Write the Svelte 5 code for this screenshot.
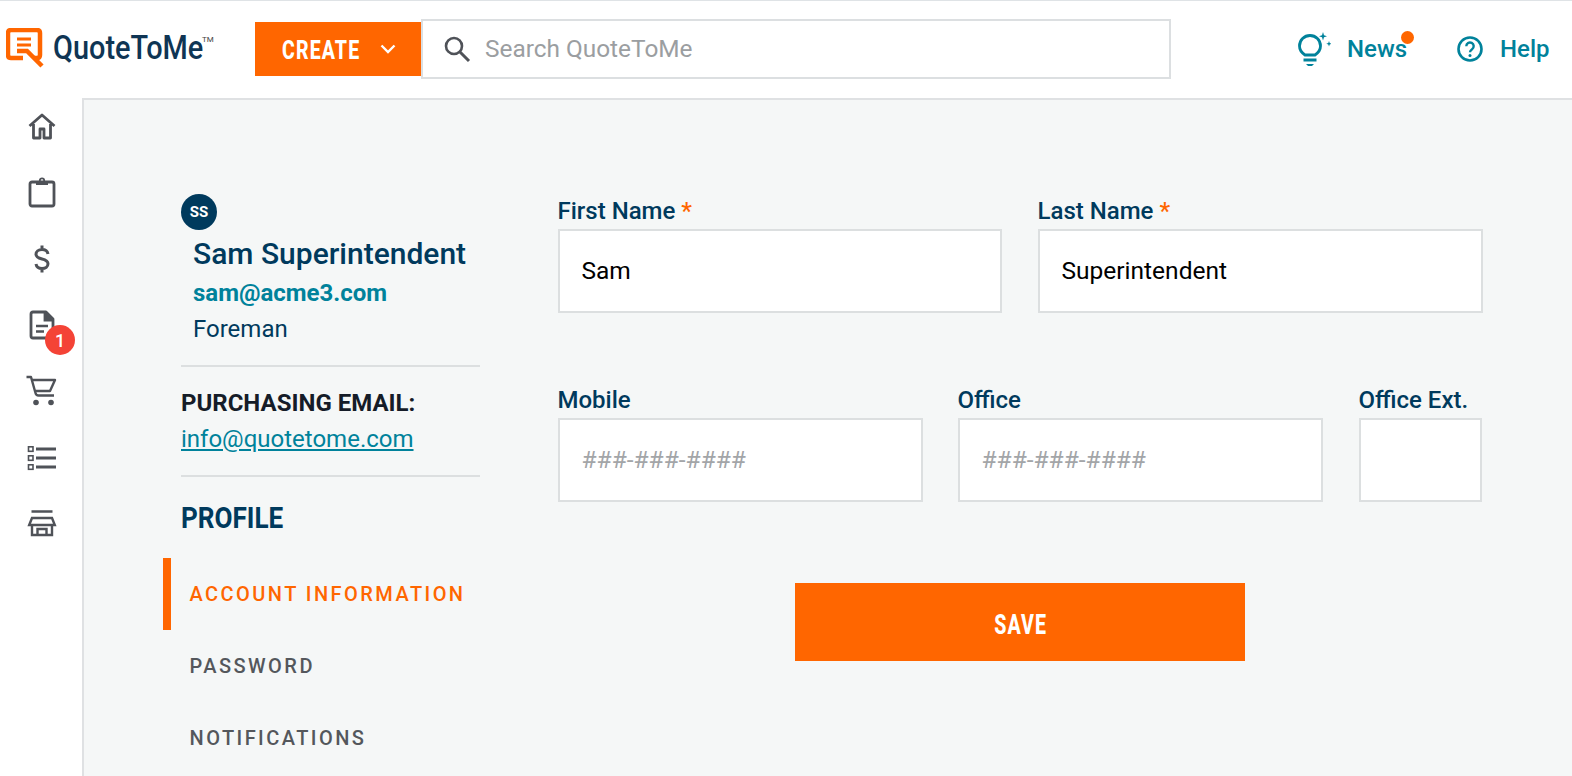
<script>
  const navIcons = ["home", "clipboard", "dollar", "doc", "cart", "list", "store"];
  const menu = [
    { label: "ACCOUNT INFORMATION", active: true },
    { label: "PASSWORD", active: false },
    { label: "NOTIFICATIONS", active: false }
  ];
</script>

<div class="page">
  <header class="topbar">
    <div class="logo">
      <svg width="38" height="44" viewBox="0 0 38 44" fill="none">
        <path d="M17 30H5q-3 0-3-3V5q0-3 3-3h26q3 0 3 3v22q0 3-3 3h-3" stroke="#ff6600" stroke-width="4.500" />
        <path d="M11 11h14M11 17h14" stroke="#ff6600" stroke-width="3" />
        <path d="M11 23h10l15 15" stroke="#ff6600" stroke-width="4.500" />
      </svg>
      <span class="wordmark">QuoteToMe</span><span class="tm">TM</span>
    </div>
    <button class="create">
      <span class="create-text">CREATE</span>
      <svg width="16" height="10" viewBox="0 0 16 10" fill="none"><path d="M1.5 1.5 8 8l6.5-6.5" stroke="#fff" stroke-width="2.4" /></svg>
    </button>
    <div class="search">
      <svg width="28" height="28" viewBox="0 0 28 28" fill="none">
        <circle cx="11" cy="11" r="8" stroke="#4f5258" stroke-width="2.6" />
        <path d="m17 17 9 9" stroke="#4f5258" stroke-width="3" />
      </svg>
      <span>Search QuoteToMe</span>
    </div>
    <div class="links">
      <a class="link news">
        <svg width="34" height="36" viewBox="0 0 34 36" fill="none">
          <path d="M8 24c-3-2-5.500-5-5.500-9a10.500 10.500 0 0 1 21 0c0 4-2.500 7-5.500 9z" stroke="#00829b" stroke-width="2.800" />
          <path d="M6.500 29h13" stroke="#00829b" stroke-width="3" />
          <path d="M9 33h8l-2 2h-4z" fill="#00829b" />
          <path d="M26 1l1 3.200 3 1-3 1-1 3.200-1-3.200-3-1 3-1zM32 10l.7 2 2 .7-2 .7-.7 2-.7-2-2-.7 2-.7z" fill="#00829b" />
        </svg>
        <span class="news-label">News<i class="dot"></i></span>
      </a>
      <a class="link help">
        <svg width="26" height="26" viewBox="0 0 26 26" fill="none">
          <circle cx="13" cy="13" r="11.500" stroke="#00829b" stroke-width="2.600" />
          <path d="M9.300 10.200a3.700 3.700 0 1 1 5.800 3c-1.300.9-2.100 1.500-2.100 3" stroke="#00829b" stroke-width="2.400" />
          <circle cx="13" cy="19.500" r="1.500" fill="#00829b" />
        </svg>
        <span>Help</span>
      </a>
    </div>
  </header>

  <div class="body">
    <nav class="rail">
      {#each navIcons as icon}
        <div class="rail-item">
          <svg width="32" height="32" viewBox="0 0 32 32" fill="none" stroke="#4f5258" stroke-width="2.800">
            {#if icon === "home"}
              <path d="M3.500 15 16 4l12.500 11M7.500 13v14h6.500v-9h4v9h6.500V13" stroke-linejoin="round" />
            {:else if icon === "clipboard"}
              <rect x="4" y="5" width="24" height="24" rx="2" />
              <path d="M10 6h12" stroke-width="4" />
              <circle cx="16" cy="3.500" r="2.200" stroke-width="1.800" />
            {:else if icon === "dollar"}
              <path d="M22 11c-.5-3-3-4.500-6-4.500-3.500 0-6 2-6 4.800s2.500 3.900 6 4.700c3.500.8 6 2 6 4.800s-2.500 4.700-6 4.700c-3 0-5.500-1.500-6-4.500M16 2.500V6.500M16 25.500v4" stroke-width="3" />
            {:else if icon === "doc"}
              <path d="M20 3H7q-2 0-2 2v22q0 2 2 2h18q2 0 2-2V10z" stroke-linejoin="round" />
              <path d="M19 3v8h8" fill="#4f5258" />
              <path d="M10 17h12M10 22.500h8" stroke-width="2.400" />
            {:else if icon === "cart"}
              <path d="M.5 2h4.500L9.500 18q.6 2.500 3 2.500h15.500" stroke-width="2.400" stroke-linejoin="round" />
              <path d="M6 5h23l-5 11H9.500" stroke-width="2.400" stroke-linejoin="round" />
              <circle cx="10" cy="27.500" r="2.800" fill="#4f5258" stroke="none" />
              <circle cx="25" cy="27.500" r="2.800" fill="#4f5258" stroke="none" />
            {:else if icon === "list"}
              <path d="M10 8h20M10 17h20M10 26h20" stroke-width="3" />
              <rect x="2.500" y="5.800" width="4.500" height="4.500" stroke-width="1.600" />
              <rect x="2.500" y="14.800" width="4.500" height="4.500" stroke-width="1.600" />
              <rect x="2.500" y="23.800" width="4.500" height="4.500" stroke-width="1.600" />
            {:else}
              <path d="M5.500 4.500h21M3.200 18 6 11h20l2.800 7zM6 18v10h20V18M11.500 28v-6h9v6" stroke-width="2.400" />
            {/if}
          </svg>
          {#if icon === "doc"}
            <span class="badge">1</span>
          {/if}
        </div>
      {/each}
    </nav>

    <main class="content">
      <aside class="side">
        <div class="avatar">SS</div>
        <div class="who">
          <div class="name">Sam Superintendent</div>
          <div class="email">sam@acme3.com</div>
          <div class="role">Foreman</div>
        </div>
        <hr />
        <div class="purchasing">PURCHASING EMAIL:</div>
        <a class="purchasing-mail">info@quotetome.com</a>
        <hr class="second" />
        <h2>PROFILE</h2>
        <ul class="menu">
          {#each menu as item}
            <li class:active={item.active}>{item.label}</li>
          {/each}
        </ul>
      </aside>

      <section class="form">
        <div class="row two">
          <label>
            <span class="lab">First Name <b>*</b></span>
            <input value="Sam" />
          </label>
          <label>
            <span class="lab">Last Name <b>*</b></span>
            <input value="Superintendent" />
          </label>
        </div>
        <div class="row three">
          <label>
            <span class="lab">Mobile</span>
            <input placeholder="###-###-####" />
          </label>
          <label>
            <span class="lab">Office</span>
            <input placeholder="###-###-####" />
          </label>
          <label>
            <span class="lab">Office Ext.</span>
            <input />
          </label>
        </div>
        <button class="save"><span>SAVE</span></button>
      </section>
    </main>
  </div>
</div>

<style>
  :global(body) {
    margin: 0;
    font-family: Roboto, "Liberation Sans", sans-serif;
    background: #fff;
  }
  .page {
    height: 776px;
    overflow: hidden;
    display: flex;
    flex-direction: column;
    border-top: 1px solid #dfe3e6;
    box-sizing: border-box;
  }
  .topbar {
    height: 97px;
    flex: none;
    display: flex;
    align-items: flex-start;
    box-sizing: border-box;
  }
  .logo {
    width: 255px;
    flex: none;
    display: flex;
    align-items: flex-start;
    padding: 27px 0 0 6px;
    box-sizing: border-box;
  }
  .wordmark {
    font-size: 34px;
    font-weight: 500;
    line-height: 40px;
    color: #0f3554;
    margin-left: 9px;
    margin-top: -1px;
    width: 149px;
    flex: none;
    white-space: nowrap;
    transform: scaleX(0.85);
    transform-origin: left;
  }
  .tm {
    font-size: 8px;
    color: #444;
    margin-top: 7px;
  }
  .create {
    width: 166px;
    height: 54px;
    margin-top: 21px;
    flex: none;
    border: 0;
    background: #ff6600;
    color: #fff;
    display: flex;
    align-items: center;
    padding: 0 0 0 27px;
    gap: 20px;
  }
  .create-text {
    font-family: Roboto, sans-serif;
    font-weight: 800;
    font-size: 26px;
    letter-spacing: 1.500px;
    width: 78px;
    padding-top: 2px;
    text-align: left;
    transform: scaleX(0.75);
    transform-origin: left;
  }
  .search {
    width: 750px;
    height: 60px;
    margin-top: 18px;
    flex: none;
    box-sizing: border-box;
    border: 2px solid #dcdfe1;
    display: flex;
    align-items: center;
    padding-left: 20px;
    gap: 14px;
    font-size: 24.400px;
    color: #9b9ea1;
  }
  .search span {
    padding-bottom: 2px;
  }
  .links {
    display: flex;
    margin-left: 126px;
    margin-top: 29px;
    gap: 50px;
  }
  .link {
    display: flex;
    align-items: center;
    color: #00829b;
    font-size: 24px;
    font-weight: 500;
    gap: 16px;
    height: 38px;
  }
  .help {
    gap: 17px;
  }
  .news-label {
    position: relative;
  }
  .dot {
    position: absolute;
    right: -7px;
    top: -4px;
    width: 13px;
    height: 13px;
    border-radius: 50%;
    background: #ff6600;
  }
  .body {
    flex: 1;
    display: flex;
    min-height: 0;
  }
  .rail {
    width: 84px;
    flex: none;
    box-sizing: border-box;
    border-right: 2px solid #dfe1e3;
    padding-top: 13px;
    display: flex;
    flex-direction: column;
  }
  .rail-item {
    height: 66px;
    display: flex;
    justify-content: center;
    padding-left: 2px;
    position: relative;
    box-sizing: border-box;
  }
  .badge {
    position: absolute;
    left: 45px;
    top: 16px;
    width: 30px;
    height: 30px;
    border-radius: 50%;
    background: #f44336;
    color: #fff;
    font-size: 18px;
    font-weight: 500;
    display: flex;
    align-items: center;
    justify-content: center;
  }
  .content {
    flex: 1;
    background: #f5f7f7;
    border-top: 2px solid #dfe1e3;
    display: flex;
    padding: 94px 0 0 97px;
    min-width: 0;
  }
  .side {
    width: 299px;
    flex: none;
  }
  .avatar {
    width: 36px;
    height: 36px;
    border-radius: 50%;
    background: #003a5d;
    color: #fff;
    font-size: 15px;
    font-weight: 700;
    display: flex;
    align-items: center;
    justify-content: center;
  }
  .who {
    padding-left: 12px;
  }
  .name {
    font-size: 30px;
    font-weight: 500;
    color: #003a5d;
    line-height: 38px;
    margin-top: 5px;
  }
  .email {
    font-size: 24px;
    font-weight: 700;
    color: #00829b;
    line-height: 36px;
    margin-top: 2px;
  }
  .role {
    font-size: 24px;
    color: #003a5d;
    line-height: 36px;
  }
  hr {
    border: 0;
    border-top: 2px solid #dcdfe0;
    margin: 18px 0 0;
  }
  .purchasing {
    font-size: 24px;
    font-weight: 700;
    color: #151c28;
    margin-top: 18px;
    line-height: 36px;
  }
  .purchasing-mail {
    font-size: 24px;
    color: #00829b;
    text-decoration: underline;
    line-height: 36px;
    display: block;
  }
  hr.second {
    margin-top: 18px;
  }
  h2 {
    font-size: 30px;
    font-weight: 700;
    color: #003a5d;
    margin: 21px 0 0;
    line-height: 40px;
    transform: scaleX(0.87);
    transform-origin: left;
  }
  .menu {
    list-style: none;
    margin: 20px 0 0 -18px;
    padding: 0;
    width: 330px;
  }
  .menu li {
    height: 72px;
    line-height: 72px;
    padding-left: 26.500px;
    font-size: 20px;
    font-weight: 500;
    letter-spacing: 2.450px;
    color: #54575c;
    box-sizing: border-box;
  }
  .menu li.active {
    color: #ff6600;
    border-left: 8px solid #ff6600;
    padding-left: 18.500px;
  }
  .form {
    margin-left: 78px;
    width: 925px;
  }
  .row {
    display: grid;
  }
  .row.two {
    grid-template-columns: 444px 445px;
    gap: 36px;
    margin-top: 1px;
  }
  .row.three {
    grid-template-columns: 365px 365px 124px;
    column-gap: 35px;
    margin-top: 71px;
  }
  .row.three label:last-child {
    margin-left: 1px;
  }
  label {
    display: block;
  }
  .lab {
    display: block;
    font-size: 24px;
    font-weight: 500;
    color: #003a5d;
    line-height: 32px;
    margin: 0 0 2px -0.500px;
    white-space: nowrap;
  }
  .lab b {
    color: #ff6600;
    font-weight: 500;
  }
  input {
    display: block;
    width: 100%;
    height: 84px;
    box-sizing: border-box;
    border: 2px solid #dcdfe0;
    background: #fff;
    padding: 0 21.500px 2px;
    font-family: inherit;
    font-size: 24.500px;
    color: #000;
    outline: none;
  }
  input::placeholder {
    color: #a3a5a8;
    opacity: 1;
  }
  .save {
    display: block;
    width: 450px;
    height: 78px;
    margin: 81px 0 0 237px;
    padding: 4px 0 0 2px;
    border: 0;
    background: #ff6600;
    color: #fff;
    font-family: Roboto, sans-serif;
    font-weight: 800;
    font-size: 28px;
    letter-spacing: 1.500px;
  }
  .save span {
    display: inline-block;
    transform: scaleX(0.7);
  }
</style>
